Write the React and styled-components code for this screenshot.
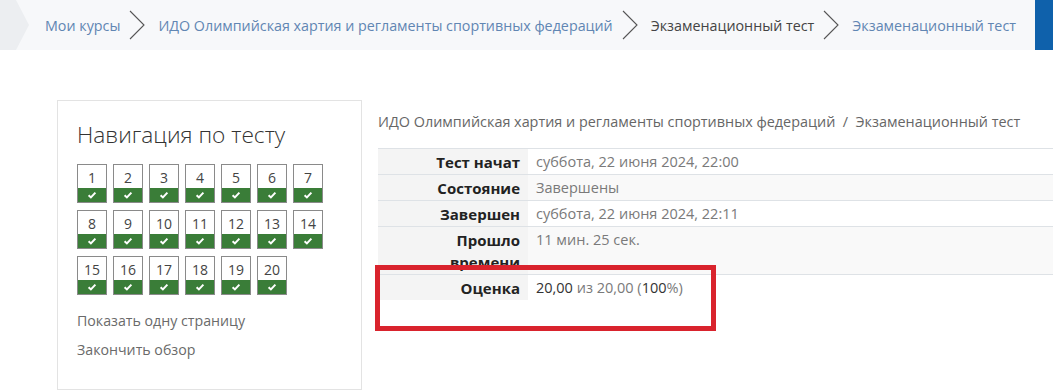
import React from "react";
import styled, { createGlobalStyle } from "styled-components";

const GlobalStyle = createGlobalStyle`
  html, body {
    margin: 0;
    padding: 0;
    background: #ffffff;
    font-family: "Open Sans", "Noto Sans", sans-serif;
    color: #444;
  }
`;

const Page = styled.div`
  position: relative;
  width: 1053px;
  height: 392px;
  overflow: hidden;
`;

const Crumbs = styled.nav`
  display: flex;
  align-items: center;
  height: 50px;
  background: #f7f8fa;
  font-size: 14.3px;
`;

const HomeTab = styled.div`
  flex: none;
  width: 29px;
  height: 50px;
  background: #eceef1;
  clip-path: polygon(0 0, 16px 0, 29px 25px, 16px 50px, 0 50px);
  margin-right: 16px;
`;

const Crumb = styled.span`
  color: ${(p) => (p.$current ? "#444" : "#6186b3")};
  white-space: nowrap;
`;

const Sep = styled.svg`
  width: 16px;
  height: 30px;
  margin: 0 13px 0 9px;
  flex: none;
`;

const BlueTab = styled.div`
  flex: none;
  margin-left: auto;
  width: 18px;
  height: 50px;
  background: #0f61ab;
`;

const Main = styled.div`
  display: flex;
  gap: 16px;
  padding: 50px 0 0 57px;
`;

const NavBlock = styled.aside`
  box-sizing: border-box;
  width: 305px;
  height: 290px;
  border: 1px solid #e3e3e3;
  padding: 18px 19px 0;
  flex: none;
`;

const NavTitle = styled.h2`
  margin: 0 0 13px;
  font-weight: 300;
  font-size: 22.7px;
  line-height: 32px;
  color: #333;
`;

const Grid = styled.div`
  display: grid;
  grid-template-columns: repeat(7, 30px);
  column-gap: 6px;
  row-gap: 7px;
  margin-bottom: 16px;
`;

const QButton = styled.div`
  box-sizing: border-box;
  width: 30px;
  height: 39px;
  border: 1px solid #8a8a8a;
  display: flex;
  flex-direction: column;
  background: #fff;
`;

const QNum = styled.span`
  flex: 1;
  display: flex;
  align-items: center;
  justify-content: center;
  font-size: 14px;
  color: #444;
  padding-top: 1px;
`;

const QState = styled.span`
  height: 14px;
  background: #3a7d38;
  display: flex;
  align-items: center;
  justify-content: center;
`;

const NavLink = styled.div`
  font-size: 14.2px;
  color: #6a6a6a;
  line-height: 20px;
  margin-bottom: 9px;
`;

const Content = styled.section`
  flex: 1;
  padding-top: 11px;
`;

const PathLine = styled.div`
  font-size: 14.4px;
  color: #666;
  line-height: 22px;
  margin-bottom: 15px;
  white-space: nowrap;
`;

const Summary = styled.table`
  border-collapse: collapse;
  width: 100%;
  font-size: 14.5px;
  line-height: 22px;
`;

const Row = styled.tr`
  border-top: 1px solid #dee2e6;
  background: ${(p) => (p.$striped ? "#f9f9f9" : "#fff")};
`;

const Head = styled.th`
  width: 120px;
  padding: 2px 8px 1px 22px;
  text-align: right;
  vertical-align: top;
  font-size: 15px;
  font-weight: 700;
  color: #222;
  background: #f4f4f4;
`;

const Cell = styled.td`
  padding: 2px 8px 1px 8px;
  vertical-align: top;
  color: #7a7a7a;
`;

const Strong = styled.span`
  color: #333;
`;

const Callout = styled.div`
  position: absolute;
  left: 375px;
  top: 265px;
  width: 341px;
  height: 66px;
  box-sizing: border-box;
  border: 5px solid #d9232d;
  pointer-events: none;
`;

const Chevron = () => (
  <Sep viewBox="0 0 16 30">
    <polyline points="1,1 15,15 1,29" fill="none" stroke="#555" strokeWidth="1.1" />
  </Sep>
);

const Check = () => (
  <svg width="10" height="8" viewBox="0 0 10 8">
    <polyline points="1.6,4.2 3.9,6.4 8.4,1.6" fill="none" stroke="#fff" strokeWidth="2" />
  </svg>
);

const questions = Array.from({ length: 20 }, (_, i) => i + 1);

const rows = [
  { label: "Тест начат", value: "суббота, 22 июня 2024, 22:00" },
  { label: "Состояние", value: "Завершены" },
  { label: "Завершен", value: "суббота, 22 июня 2024, 22:11" },
  { label: "Прошло времени", value: "11 мин. 25 сек." },
];

export default function App() {
  return (
    <Page>
      <GlobalStyle />
      <Crumbs>
        <HomeTab />
        <Crumb>Мои курсы</Crumb>
        <Chevron />
        <Crumb>ИДО Олимпийская хартия и регламенты спортивных федераций</Crumb>
        <Chevron />
        <Crumb $current>Экзаменационный тест</Crumb>
        <Chevron />
        <Crumb>Экзаменационный тест</Crumb>
        <BlueTab />
      </Crumbs>

      <Main>
        <NavBlock>
          <NavTitle>Навигация по тесту</NavTitle>
          <Grid>
            {questions.map((n) => (
              <QButton key={n}>
                <QNum>{n}</QNum>
                <QState>
                  <Check />
                </QState>
              </QButton>
            ))}
          </Grid>
          <NavLink>Показать одну страницу</NavLink>
          <NavLink>Закончить обзор</NavLink>
        </NavBlock>

        <Content>
          <PathLine>
            ИДО Олимпийская хартия и регламенты спортивных федераций&nbsp;&nbsp;/&nbsp;&nbsp;Экзаменационный тест
          </PathLine>
          <Summary>
            <tbody>
              {rows.map((r, i) => (
                <Row key={r.label} $striped={i % 2 === 1}>
                  <Head>{r.label}</Head>
                  <Cell>{r.value}</Cell>
                </Row>
              ))}
              <Row>
                <Head>Оценка</Head>
                <Cell>
                  <Strong>20,00</Strong> из 20,00 (<Strong>100</Strong>%)
                </Cell>
              </Row>
            </tbody>
          </Summary>
        </Content>
      </Main>
      <Callout />
    </Page>
  );
}
